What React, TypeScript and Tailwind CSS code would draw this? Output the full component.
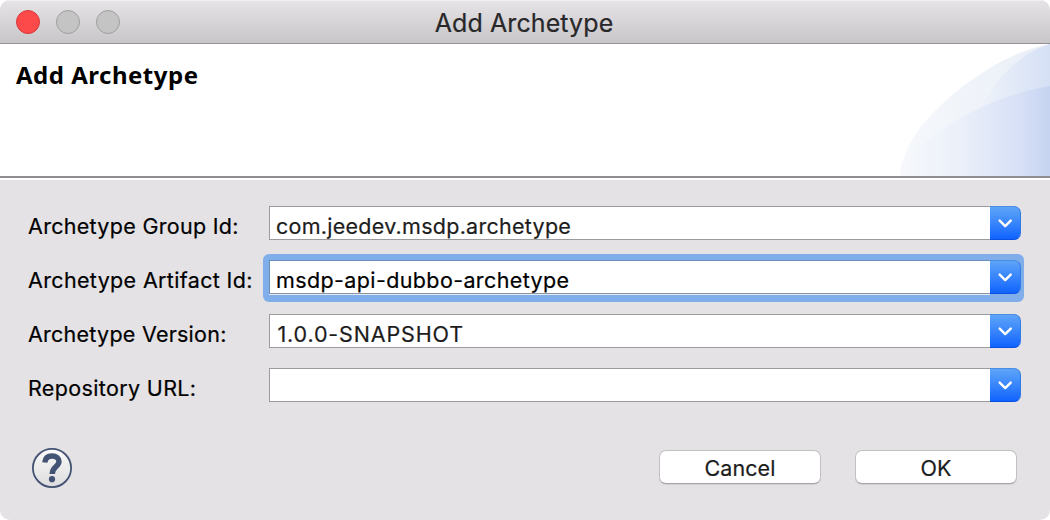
import React from "react";

type FieldProps = {
  label: string;
  value: string;
  labelClass: string;
  valueClass: string;
  focused?: boolean;
};

function Field({ label, value, labelClass, valueClass, focused = false }: FieldProps) {
  return (
    <div className="flex h-[34px] items-center">
      <label className={`w-[241px] shrink-0 whitespace-nowrap pt-[5px] leading-[30px] ${labelClass}`}>{label}</label>
      <div className="relative flex h-[34px] w-[752px] shrink-0">
        {focused && <span className="absolute -top-[6px] -right-[3px] -bottom-[8px] -left-[6px] rounded-[6px] bg-[#80aeea]" />}
        <div
          className={`relative flex w-[721px] shrink-0 items-center border border-r-0 bg-white pl-[6px] ${
            focused
              ? "border-[#6b8fbd] border-b-[#8a94a3] text-black shadow-[0_1px_0_#e4ebf6]"
              : "border-[#9b9a9c] text-[#1c1c1c]"
          }`}
        >
          <span className={`whitespace-nowrap pt-[6px] leading-[28px] ${valueClass}`}>{value}</span>
        </div>
        <button
          aria-label="Open list"
          className="relative flex h-[34px] w-[31px] shrink-0 items-center justify-center rounded-r-[7px] border-y border-r border-t-[#4a8ce2] border-r-[#317be5] border-b-[#0b50e0] bg-linear-to-b from-[#5ea4f8] to-[#0f62fe]"
        >
          <svg width="14" height="9" viewBox="0 0 14 9" fill="none">
            <path d="M1.7 1.6L7.2 7.1L12.7 1.6" stroke="white" strokeWidth="2.4" strokeLinecap="round" strokeLinejoin="round" />
          </svg>
        </button>
      </div>
    </div>
  );
}

function HeaderArt() {
  return (
    <svg className="h-[132px] w-[150px]" viewBox="0 0 150 132">
      <defs>
        <linearGradient id="outer" x1="0" x2="1">
          <stop offset="0" stopColor="#f6f8fb" />
          <stop offset="1" stopColor="#e9eff8" />
        </linearGradient>
        <linearGradient id="upper" x1="0" x2="1">
          <stop offset="0" stopColor="#eff3fa" />
          <stop offset="1" stopColor="#d5e0f5" />
        </linearGradient>
        <linearGradient id="lower" x1="0" x2="1">
          <stop offset="0" stopColor="#f6f8fc" />
          <stop offset="0.4" stopColor="#ebf0f9" />
          <stop offset="0.8" stopColor="#d7e0f6" />
          <stop offset="1" stopColor="#c5d3f1" />
        </linearGradient>
      </defs>
      <path d="M0 132C0 119 8 96 30 72C60 40 106 8 150 0V132Z" fill="url(#outer)" />
      <path d="M78 66C98 33 118 10 150 0V66Z" fill="url(#upper)" />
      <path d="M0 132C2 121 12 108 27 97C60 69 108 49 150 42V132Z" fill="url(#lower)" />
    </svg>
  );
}

export default function App() {
  return (
    <div className="h-[520px] w-[1050px] overflow-hidden bg-white font-['Inter',sans-serif] text-[21.5px] text-black [-webkit-text-stroke:0.2px] [font-feature-settings:'calt'_0]">
      <div className="flex h-full flex-col overflow-hidden rounded-[10px] bg-[#e4e2e4]">
        <header className="grid h-[44px] shrink-0 grid-cols-[1fr_auto_1fr] items-center border-b border-[#929092] bg-linear-to-b from-[#e6e4e6] to-[#c8c6c8] shadow-[inset_0_1px_0_#f2f1f2]">
          <div className="flex gap-4 pl-4">
            <span className="size-6 rounded-full border border-[#d8383a] bg-[#fc4a4a]" />
            <span className="size-6 rounded-full border border-[#a09fa0] bg-[#c5c4c5]" />
            <span className="size-6 rounded-full border border-[#a09fa0] bg-[#c5c4c5]" />
          </div>
          <h1 className="pt-[3px] pr-[2px] text-[25px] leading-[38px] tracking-[0.1px] text-[#282729]">Add Archetype</h1>
          <div />
        </header>
        <section className="flex h-[134px] shrink-0 justify-between border-b-2 border-[#8f8e90] bg-white">
          <h2 className="pt-[15px] pl-[16px] font-['Noto_Sans',sans-serif] text-[24px] leading-[32px] font-bold tracking-[0.5px] [-webkit-text-stroke:0]">Add Archetype</h2>
          <HeaderArt />
        </section>
        <main className="flex flex-1 flex-col border-t-2 border-white pt-[26px] pl-[28px]">
          <div className="flex flex-col gap-5">
            <Field label="Archetype Group Id:" value="com.jeedev.msdp.archetype" labelClass="tracking-[0.3px]" valueClass="tracking-[0.27px]" />
            <Field label="Archetype Artifact Id:" value="msdp-api-dubbo-archetype" labelClass="tracking-[0.35px]" valueClass="tracking-[0.38px]" focused />
            <Field label="Archetype Version:" value="1.0.0-SNAPSHOT" labelClass="tracking-[0.25px]" valueClass="tracking-[0.85px] pl-[1.5px]" />
            <Field label="Repository URL:" value="" labelClass="tracking-[0.35px]" valueClass="" />
          </div>
          <footer className="mt-[46px] flex items-start pr-[33px] pl-[4px]">
            <button aria-label="Help" className="size-10">
              <svg width="40" height="40" viewBox="0 0 40 40">
                <defs>
                  <linearGradient id="help" x1="0" y1="0" x2="0" y2="1">
                    <stop stopColor="#fafafa" />
                    <stop offset="1" stopColor="#deddde" />
                  </linearGradient>
                </defs>
                <circle cx="20" cy="20" r="19.1" fill="url(#help)" stroke="#435374" strokeWidth="1.8" />
                <path d="M12.8 14.6C13.2 10.4 15.7 8 20 8C24.4 8 27 10.3 27 13.6C27 18.6 20.2 18.8 20.2 26" fill="none" stroke="#435374" strokeWidth="5.4" />
                <circle cx="20" cy="31.2" r="3.1" fill="#435374" />
              </svg>
            </button>
            <div className="ml-auto flex gap-[34px] pt-[2px]">
              <button className="h-[34px] w-[162px] rounded-[7px] border border-[#c2c0c2] border-b-[#a5a3a5] bg-white pt-px text-[#1c1c1c] shadow-[0_1px_0_#d2d0d2] tracking-[0.1px]">Cancel</button>
              <button className="h-[34px] w-[162px] rounded-[7px] border border-[#c2c0c2] border-b-[#a5a3a5] bg-white pt-px text-[#1c1c1c] shadow-[0_1px_0_#d2d0d2]">OK</button>
            </div>
          </footer>
        </main>
      </div>
    </div>
  );
}
